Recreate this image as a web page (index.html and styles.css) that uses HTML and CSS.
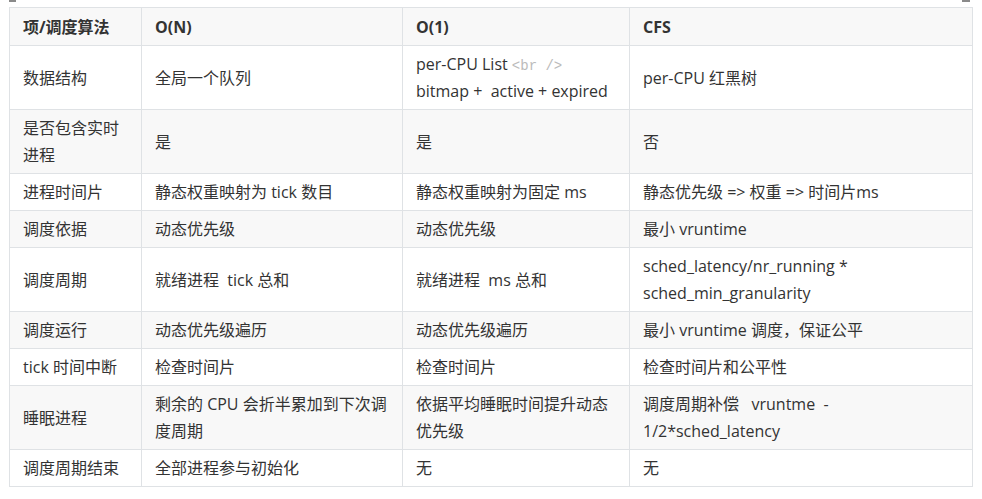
FILE: index.html
```html
<!DOCTYPE html>
<html lang="zh">
<head>
<meta charset="utf-8">
<title>调度算法对比</title>
<link rel="stylesheet" href="styles.css">
</head>
<body>
<div class="page">
  <span class="mark mark-left"></span>
  <span class="mark mark-right"></span>
  <table class="cmp">
    <colgroup>
      <col class="c1"><col class="c2"><col class="c3"><col class="c4">
    </colgroup>
    <thead>
      <tr><th>项/调度算法</th><th>O(N)</th><th>O(1)</th><th>CFS</th></tr>
    </thead>
    <tbody>
      <tr><td>数据结构</td><td>全局一个队列</td><td>per-CPU List <code class="br">&lt;br /&gt;</code><br>bitmap +&nbsp; active + expired</td><td>per-CPU 红黑树</td></tr>
      <tr><td>是否包含实时进程</td><td>是</td><td>是</td><td>否</td></tr>
      <tr><td>进程时间片</td><td>静态权重映射为 tick 数目</td><td>静态权重映射为固定 ms</td><td>静态优先级 =&gt; 权重 =&gt; 时间片ms</td></tr>
      <tr><td>调度依据</td><td>动态优先级</td><td>动态优先级</td><td>最小 vruntime</td></tr>
      <tr><td>调度周期</td><td>就绪进程&nbsp; tick 总和</td><td>就绪进程&nbsp; ms 总和</td><td>sched_latency/nr_running *<br>sched_min_granularity</td></tr>
      <tr><td>调度运行</td><td>动态优先级遍历</td><td>动态优先级遍历</td><td>最小 vruntime 调度，保证公平</td></tr>
      <tr><td>tick 时间中断</td><td>检查时间片</td><td>检查时间片</td><td>检查时间片和公平性</td></tr>
      <tr><td>睡眠进程</td><td>剩余的 CPU 会折半累加到下次调度周期</td><td>依据平均睡眠时间提升动态优先级</td><td>调度周期补偿&nbsp;&nbsp; vruntme&nbsp; -<br>1/2*sched_latency</td></tr>
      <tr><td>调度周期结束</td><td>全部进程参与初始化</td><td>无</td><td>无</td></tr>
    </tbody>
  </table>
</div>
</body>
</html>
```
FILE: styles.css
```css
html, body {
  margin: 0;
  padding: 0;
  background: #fff;
}
body {
  font-family: "Open Sans", "Noto Sans CJK SC", sans-serif;
  font-size: 16px;
  line-height: 27px;
  color: #333;
}
.page {
  position: relative;
  padding: 7px 10px 0 9px;
}
.mark {
  position: absolute;
  top: 0;
  height: 2px;
  background: #8a8a8a;
}
.mark-left { left: 9px; width: 7px; }
.mark-right { left: 962px; width: 8px; }
.cmp {
  width: 963px;
  border-collapse: collapse;
  table-layout: fixed;
}
.c1 { width: 132px; }
.c2 { width: 261px; }
.c3 { width: 227px; }
.c4 { width: 343px; }
.cmp th, .cmp td {
  border: 1px solid #dfe2e5;
  padding: 5px 13px 4px;
  text-align: left;
  vertical-align: middle;
}
.cmp th {
  padding-top: 6px;
  font-weight: 700;
  background: #f8f8f8;
}
.cmp tbody tr:nth-child(2n) {
  background: #f8f8f8;
}
.br {
  font-family: "Liberation Mono", monospace;
  font-size: 14px;
  line-height: 1;
  color: #bbb;
}
```
